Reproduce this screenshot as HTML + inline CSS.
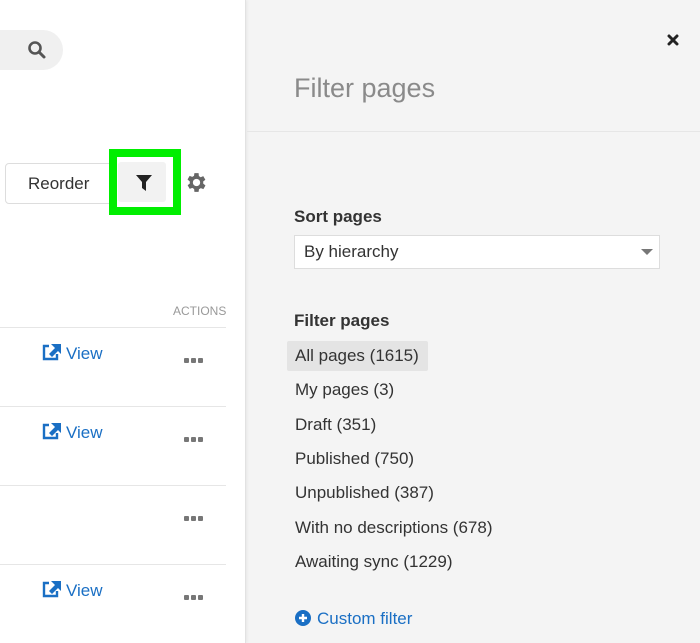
<!DOCTYPE html>
<html><head><style>
*{margin:0;padding:0;box-sizing:border-box}
body{width:700px;height:643px;overflow:hidden;background:#f4f4f4;font-family:"Liberation Sans",sans-serif;position:relative;color:#333}
.a{position:absolute}
.left{left:0;top:0;width:246px;height:643px;background:#fff;border-right:1px solid #e2e2e2;box-shadow:1px 0 3px rgba(0,0,0,.06)}
.line{position:absolute;left:0;width:226px;height:1px;background:#e6e6e6}
.view{position:absolute;left:41px;color:#1a6fc4;font-size:17px}
.view svg{margin-right:3px}
.dots{position:absolute;left:184px;width:24px;height:5px;display:flex;gap:2px}
.dots i{display:block;width:5px;height:5px;background:#777;border-radius:1px}
.it{position:absolute;left:295px;font-size:17px;color:#333}
</style></head><body>
<div class="a left">
  <div class="a" style="left:-30px;top:30px;width:93px;height:40px;border-radius:20px;background:#f0f0f0"></div>
  <svg class="a" style="left:27px;top:40px" width="20" height="20" viewBox="0 0 20 20"><circle cx="8" cy="8" r="5.5" fill="none" stroke="#555" stroke-width="2.6"/><line x1="12" y1="12" x2="17" y2="17" stroke="#555" stroke-width="3" stroke-linecap="round"/></svg>
  <div class="a" style="left:5px;top:163px;width:112px;height:41px;border:1px solid #ddd;border-radius:4px;font-size:17px;line-height:39px;padding-left:22px;color:#333">Reorder</div>
  <div class="a" style="left:109px;top:149px;width:72px;height:66px;border:8px solid #00ee00"></div>
  <div class="a" style="left:118px;top:162px;width:48px;height:40px;background:#f2f2f2;border-radius:3px"></div>
  <svg class="a" style="left:135px;top:174px" width="18" height="18" viewBox="0 0 18 18"><path d="M1 1H17L11 8V17L7 14V8Z" fill="#222"/></svg>
  <svg class="a" style="left:184px;top:170px" width="25" height="25" viewBox="0 0 24 24"><path fill="#666" fill-rule="evenodd" d="M19.4 13a7.5 7.5 0 000-2l2.1-1.6-2-3.5-2.5 1a7.4 7.4 0 00-1.7-1L15 3h-4l-.4 2.6a7.4 7.4 0 00-1.7 1l-2.5-1-2 3.5L6.6 11a7.5 7.5 0 000 2l-2.1 1.6 2 3.5 2.5-1a7.4 7.4 0 001.7 1L11 21h4l.4-2.6a7.4 7.4 0 001.7-1l2.5 1 2-3.5zM13 15.5a3.5 3.5 0 110-7 3.5 3.5 0 010 7z" transform="translate(-1 0)"/></svg>
  <div class="a" style="left:173px;top:304px;font-size:12px;color:#999">ACTIONS</div>
  <div class="line" style="top:327px"></div>
  <div class="line" style="top:406px"></div>
  <div class="line" style="top:485px"></div>
  <div class="line" style="top:564px"></div>
  <div class="view" style="top:343px"><svg width="22" height="18" viewBox="0 0 22 18" style="vertical-align:-2px"><path d="M8 3H3V16H16V11" fill="none" stroke="#1a6fc4" stroke-width="2.4"/><path d="M10 1H20V11L17 8 11 14 8 11 14 5Z" fill="#1a6fc4"/></svg>View</div>
  <div class="view" style="top:422px"><svg width="22" height="18" viewBox="0 0 22 18" style="vertical-align:-2px"><path d="M8 3H3V16H16V11" fill="none" stroke="#1a6fc4" stroke-width="2.4"/><path d="M10 1H20V11L17 8 11 14 8 11 14 5Z" fill="#1a6fc4"/></svg>View</div>
  <div class="view" style="top:580px"><svg width="22" height="18" viewBox="0 0 22 18" style="vertical-align:-2px"><path d="M8 3H3V16H16V11" fill="none" stroke="#1a6fc4" stroke-width="2.4"/><path d="M10 1H20V11L17 8 11 14 8 11 14 5Z" fill="#1a6fc4"/></svg>View</div>
  <div class="dots" style="top:358px"><i></i><i></i><i></i></div>
  <div class="dots" style="top:437px"><i></i><i></i><i></i></div>
  <div class="dots" style="top:516px"><i></i><i></i><i></i></div>
  <div class="dots" style="top:595px"><i></i><i></i><i></i></div>
</div>
<svg class="a" style="left:667px;top:34px" width="12" height="12" viewBox="0 0 12 12"><path d="M2 2L10 10M10 2L2 10" stroke="#222" stroke-width="3" stroke-linecap="round"/></svg>
<div class="a" style="left:294px;top:73px;font-size:27px;color:#8a8a8a;font-weight:300">Filter pages</div>
<div class="a" style="left:247px;top:131px;width:453px;height:1px;background:#e6e6e6"></div>
<div class="a" style="left:294px;top:207px;font-size:17px;font-weight:bold;color:#333">Sort pages</div>
<div class="a" style="left:294px;top:235px;width:366px;height:34px;background:#fff;border:1px solid #ddd;font-size:17px;line-height:32px;padding-left:9px">By hierarchy</div>
<div class="a" style="left:641px;top:249px;width:0;height:0;border-left:6px solid transparent;border-right:6px solid transparent;border-top:6px solid #777"></div>
<div class="a" style="left:294px;top:311px;font-size:17px;font-weight:bold;color:#333">Filter pages</div>
<div class="a" style="left:287px;top:341px;width:141px;height:30px;background:#e4e4e4;border-radius:2px"></div>
<div class="it" style="top:346px">All pages (1615)</div>
<div class="it" style="top:380px">My pages (3)</div>
<div class="it" style="top:415px">Draft (351)</div>
<div class="it" style="top:449px">Published (750)</div>
<div class="it" style="top:483px">Unpublished (387)</div>
<div class="it" style="top:518px">With no descriptions (678)</div>
<div class="it" style="top:552px">Awaiting sync (1229)</div>
<div class="a" style="left:295px;top:609px;font-size:17px;color:#1a6fc4"><svg width="16" height="16" viewBox="0 0 16 16" style="vertical-align:-2px;margin-right:6px"><circle cx="8" cy="8" r="8" fill="#1a6fc4"/><path d="M8 4V12M4 8H12" stroke="#fff" stroke-width="2.4"/></svg>Custom filter</div>
</body></html>
